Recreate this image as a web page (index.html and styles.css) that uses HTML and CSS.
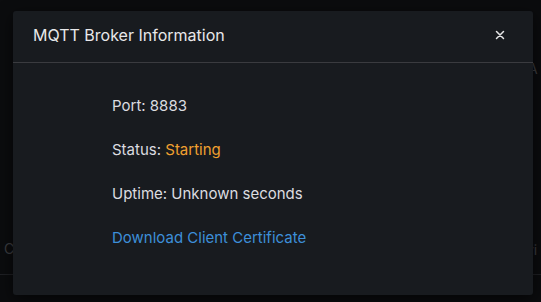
FILE: index.html
```html
<!DOCTYPE html>
<html lang="en">
<head>
    <meta charset="UTF-8">
    <meta name="viewport" content="width=device-width, initial-scale=1.0">
    <title>MQTT Broker Information</title>
    <link rel="stylesheet" href="styles.css">
</head>
<body>
    <div class="backdrop">
        <span class="bg-text bg-left">Co</span>
        <span class="bg-text bg-right-top">A</span>
        <span class="bg-text bg-right">vi</span>
        <div class="bg-line"></div>
    </div>

    <div class="modal">
        <div class="modal-header">
            <h2>MQTT Broker Information</h2>
            <button class="close-btn" aria-label="Close">
                <svg width="10" height="10" viewBox="0 0 10 10">
                    <path d="M1.5 1.5 L8.5 8.5 M8.5 1.5 L1.5 8.5" stroke="#e6e6e6" stroke-width="1.5" stroke-linecap="round"/>
                </svg>
            </button>
        </div>
        <div class="modal-body">
            <p>Port: 8883</p>
            <p>Status: <span class="status">Starting</span></p>
            <p>Uptime: Unknown seconds</p>
            <p><a href="#">Download Client Certificate</a></p>
        </div>
    </div>
</body>
</html>
```

FILE: styles.css
```css
* {
    box-sizing: border-box;
    font-family: 'Inter', 'Open Sans', sans-serif;
}

body {
    margin: 0;
    width: 541px;
    height: 302px;
    background: #0b0c0e;
    position: relative;
    overflow: hidden;
    color: #d8d9dc;
}

.backdrop {
    position: absolute;
    inset: 0;
}

.bg-text {
    position: absolute;
    color: #3b3c40;
    font-size: 14px;
}

.bg-left { left: 4px; top: 240px; }
.bg-right-top { left: 528px; top: 60px; }
.bg-right { left: 526px; top: 241px; }

.bg-line {
    position: absolute;
    left: 0;
    right: 0;
    top: 274px;
    height: 1px;
    background: #1f2024;
}

.modal {
    position: absolute;
    left: 13px;
    top: 11px;
    width: 520px;
    height: 284px;
    background: #181b1f;
    border-radius: 3px;
    box-shadow: 0 4px 16px rgba(0, 0, 0, 0.6);
}

.modal-header {
    height: 52px;
    display: flex;
    align-items: center;
    justify-content: space-between;
    padding: 0 24px 3px 20px;
    border-bottom: 1px solid #3a3b3f;
}

.modal-header h2 {
    margin: 0;
    font-size: 16px;
    font-weight: 400;
    color: #e8e8ea;
}

.close-btn {
    background: none;
    border: none;
    padding: 4px;
    cursor: pointer;
    display: flex;
}

.modal-body {
    padding: 34px 0 0 99px;
}

.modal-body p {
    margin: 0 0 27px;
    font-size: 15px;
    line-height: 17px;
    color: #dcdde0;
}

.status {
    color: #f0a030;
}

.modal-body a {
    color: #3d8fd9;
    text-decoration: none;
}
```
